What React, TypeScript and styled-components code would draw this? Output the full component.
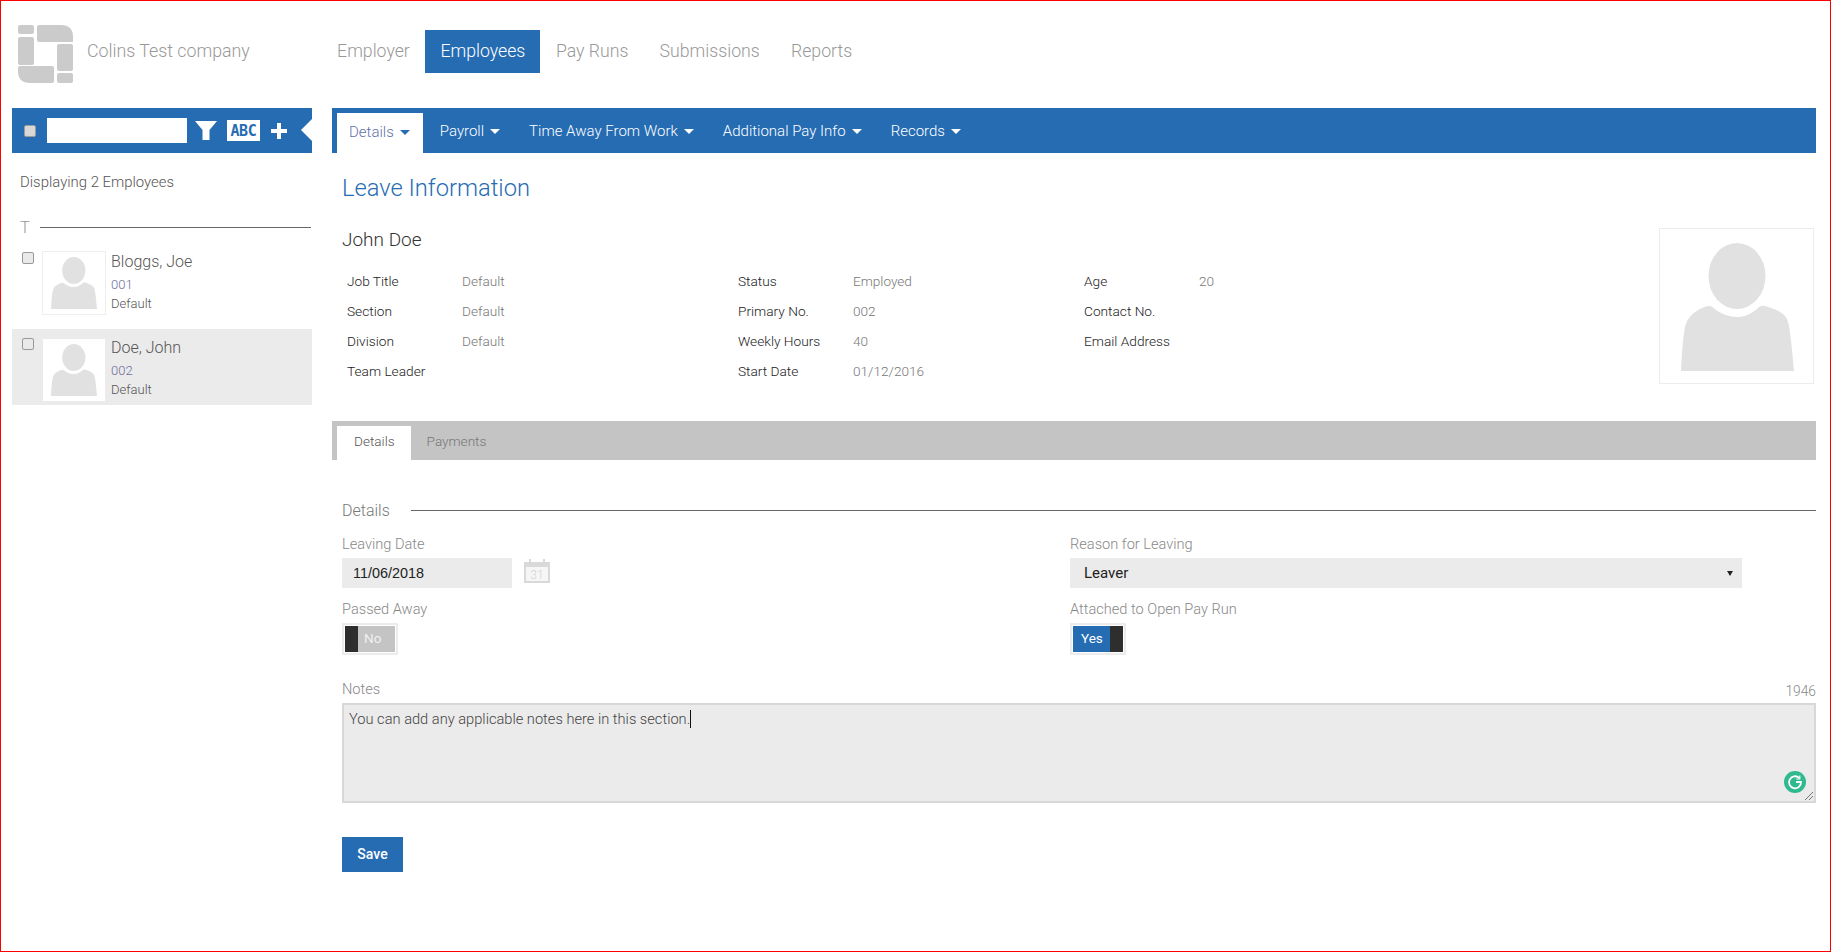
import React from "react";
import styled, { createGlobalStyle } from "styled-components";

const Global = createGlobalStyle`
  html, body { margin: 0; padding: 0; background: #fff; }
  body { font-family: Roboto, "Liberation Sans", sans-serif; font-weight: 300; color: #444; }
  * { box-sizing: border-box; }
`;

const BLUE = "#256cb3";

const Frame = styled.div`
  width: 1831px; height: 952px; border: 1px solid #f00; overflow: hidden;
  display: flex; flex-direction: column;
`;
const Header = styled.header`
  height: 107px; display: flex; align-items: flex-start; flex-shrink: 0;
`;
const Brand = styled.div`
  width: 331px; display: flex; align-items: center; padding: 24px 0 0 17px; gap: 13px;
`;
const Company = styled.span`
  font-size: 17.8px; color: #999; margin-top: -8px;
`;
const TopNav = styled.nav`
  display: flex; margin-top: 29px; margin-left: -10.5px;
`;
const TopLink = styled.a<{ $active?: boolean }>`
  height: 43px; padding: 0 ${p => (p.$active ? 15 : 15.6)}px 1px; display: flex; align-items: center; font-size: 17.7px;
  color: ${p => (p.$active ? "#fff" : "#999")};
  background: ${p => (p.$active ? BLUE : "transparent")};
`;
const Body = styled.div`
  display: flex; flex: 1; padding-left: 11px; padding-right: 14px; gap: 20px;
`;
const Sidebar = styled.aside`
  width: 300px; flex-shrink: 0; display: flex; flex-direction: column;
`;
const SideBar = styled.div`
  position: relative; height: 45px; background: ${BLUE}; display: flex; align-items: center;
  padding-left: 12px;
`;
const SideNotch = styled.div`
  position: absolute; right: 0; top: 11px; width: 0; height: 0;
  border-top: 11.5px solid transparent; border-bottom: 11.5px solid transparent;
  border-right: 11px solid #fff;
`;
const SideCheck = styled.span`
  width: 12px; height: 12px; border-radius: 2px; background: #d8d8d8; border: 1px solid #9c9c9c;
`;
const SearchBox = styled.div`
  width: 140px; height: 25px; background: #fff; margin-left: 11px;
`;
const FilterIcon = styled.svg`
  margin-left: 8px; flex-shrink: 0;
`;
const AbcBadge = styled.span`
  width: 33px; height: 21px; margin-left: 10px; background: #fff; color: ${BLUE};
  font: 700 15px/22px "DejaVu Sans Mono", monospace; text-align: center; letter-spacing: -0.3px;
`;
const PlusIcon = styled.svg`
  margin-left: 11px;
`;
const Displaying = styled.div`
  font-size: 14.9px; color: #555; padding: 21px 0 0 8px; line-height: 17px;
`;
const LetterRow = styled.div`
  display: flex; align-items: center; margin-top: 26px; padding-left: 8px; gap: 10px; height: 20px;
`;
const Letter = styled.span`
  font-size: 16.5px; color: #999;
`;
const Rule = styled.div`
  flex: 1; height: 1px; background: #666; margin-right: 1px;
`;
const PersonList = styled.div`
  display: flex; flex-direction: column; gap: 11px; margin-top: 5px;
`;
const Person = styled.div<{ $selected?: boolean }>`
  display: flex; height: 76px; padding: 9px 0 0 10px;
  background: ${p => (p.$selected ? "#ebebeb" : "transparent")};
`;
const PersonCheck = styled.span<{ $selected?: boolean }>`
  width: 12px; height: 12px; border-radius: 2px; background: #e9e9e9; border: 1px solid #999;
  flex-shrink: 0; margin-top: ${p => (p.$selected ? 0 : 1)}px;
`;
const Thumb = styled.div<{ $selected?: boolean }>`
  width: 64px; height: 64px; margin-left: 8px; background: #fff; flex-shrink: 0;
  border: 1px solid ${p => (p.$selected ? "#ebebeb" : "#eeeeee")};
  display: flex; align-items: flex-end; justify-content: center; padding-bottom: 5px;
`;
const PersonText = styled.div`
  margin-left: 5px; display: flex; flex-direction: column;
`;
const PersonName = styled.div<{ $selected?: boolean }>`
  font-size: 16px; color: #555; line-height: 20px; margin-top: ${p => (p.$selected ? 0 : 1)}px;
`;
const PersonNo = styled.div`
  font-size: 13px; color: #6e6e9a; line-height: 19px; margin-top: 3px;
`;
const PersonDept = styled.div`
  font-size: 13px; color: #555; line-height: 19px;
`;
const Main = styled.main`
  flex: 1; display: flex; flex-direction: column; min-width: 0;
`;
const SubNav = styled.div`
  height: 45px; background: ${BLUE}; display: flex; align-items: flex-end; padding-left: 5px; flex-shrink: 0;
`;
const SubItem = styled.div<{ $active?: boolean }>`
  height: 40px; display: flex; align-items: center; font-size: 15px; gap: 6px;
  padding: 0 ${p => (p.$active ? 13 : 12)}px ${p => (p.$active ? 2 : 4)}px ${p => (p.$active ? 12 : 0)}px;
  margin-right: 17px;
  color: ${p => (p.$active ? "#5f6fa8" : "#fff")};
  background: ${p => (p.$active ? "#fff" : "transparent")};
  font-weight: 300;
`;
const Caret = styled.span<{ $dark?: boolean }>`
  width: 0; height: 0; border-left: 5px solid transparent; border-right: 5px solid transparent;
  border-top: 5px solid ${p => (p.$dark ? BLUE : "#fff")};
`;
const Title = styled.h1`
  margin: 20px 0 0 10px; font-size: 23.7px; font-weight: 300; color: ${BLUE}; line-height: 30px;
`;
const InfoArea = styled.div`
  display: flex; height: 211px;
`;
const InfoLeft = styled.div`
  flex: 1; padding-left: 10px;
`;
const EmpName = styled.h2`
  margin: 25px 0 0; font-size: 19px; font-weight: 300; color: #333; line-height: 24px;
`;
const InfoGrid = styled.div`
  display: grid; grid-template-columns: 391px 346px 300px; margin-top: 14px; padding-left: 5px;
`;
const InfoCol = styled.div`
  display: flex; flex-direction: column;
`;
const InfoRow = styled.div`
  height: 30px; display: flex; align-items: center; font-size: 13.7px;
`;
const InfoKey = styled.span`
  width: 115px; color: #222; font-weight: 300;
`;
const InfoVal = styled.span`
  color: #777; font-size: 13.6px;
`;
const Photo = styled.div`
  width: 155px; height: 156px; border: 1px solid #ececec; margin-top: 25px; margin-right: 2px;
  display: flex; align-items: flex-end; justify-content: center; padding: 0 0 12px 2px;
`;
const GreyTabs = styled.div`
  height: 39px; background: #c4c4c4; display: flex; align-items: flex-end; padding-left: 5px; flex-shrink: 0;
  margin-top: 7px;
`;
const GreyTab = styled.div<{ $active?: boolean }>`
  height: 34px; font-size: 13.6px; display: flex; align-items: center;
  padding: 0 ${p => (p.$active ? 16 : 15)}px 4px ${p => (p.$active ? 17 : 16)}px;
  background: ${p => (p.$active ? "#fff" : "transparent")};
  color: ${p => (p.$active ? "#555" : "#777")};
`;
const SectionHead = styled.div`
  display: flex; align-items: center; gap: 21px; padding-left: 10px; margin-top: 40px; height: 20px;
`;
const SectionName = styled.span`
  font-size: 16px; color: #777;
`;
const SectionRule = styled.div`
  flex: 1; height: 1px; background: #666;
`;
const FormGrid = styled.div`
  display: grid; grid-template-columns: 728px 672px; padding-left: 10px; margin-top: 15px;
`;
const Field = styled.div`
  display: flex; flex-direction: column;
`;
const FieldLabel = styled.label`
  font-size: 14.6px; color: #888; line-height: 18px; height: 21px;
`;
const DateRow = styled.div`
  display: flex; align-items: flex-start; gap: 12px; height: 30px; margin-top: 2px; margin-bottom: 12px;
`;
const DateInput = styled.div`
  width: 170px; height: 30px; background: #ebebeb; font: 400 14.4px/30px "Liberation Sans", Arial, sans-serif;
  color: #222; padding-left: 11px;
`;
const CalendarIcon = styled.svg`
  margin-top: 1px;
`;
const SelectBox = styled.div`
  position: relative; height: 30px; background: #ebebeb; margin-top: 2px; margin-bottom: 12px;
  font: 400 15px/30px Roboto, sans-serif; color: #222; padding-left: 14px;
`;
const SelectArrow = styled.span`
  position: absolute; right: 9px; top: 13px; width: 0; height: 0;
  border-left: 3px solid transparent; border-right: 3px solid transparent; border-top: 5px solid #222;
`;
const ToggleFrame = styled.div`
  width: 56px; height: 32px; border: 2px solid #ececec; background: #fff; padding: 1px; display: flex;
  margin-top: 2px;
`;
const ToggleKnob = styled.span`
  width: 13px; background: #2e2e2e;
`;
const ToggleLabel = styled.span<{ $on?: boolean }>`
  width: 37px; font-size: 13.5px; font-weight: 400;
  background: ${p => (p.$on ? BLUE : "#c4c4c4")}; color: ${p => (p.$on ? "#fff" : "#f0f0f0")};
  display: flex; align-items: center; padding: 0 0 2px ${p => (p.$on ? 8 : 6)}px;
`;
const NotesHead = styled.div`
  display: flex; justify-content: space-between; align-items: flex-end; padding-left: 10px; margin-top: 24px; height: 20px;
`;
const NotesLabel = styled.span`
  font-size: 14.6px; color: #888; line-height: 20px;
`;
const Counter = styled.span`
  font-size: 13.8px; color: #888; line-height: 15px;
`;
const NotesBox = styled.div`
  position: relative; margin-left: 10px; margin-top: 4px; height: 100px; background: #ebebeb;
  border: 2px solid #d8d8d8; padding: 4px 5px; font-size: 14.65px; color: #444; line-height: 21px;
  font-weight: 300;
`;
const TextCaret = styled.span`
  display: inline-block; width: 1px; height: 18px; background: #111; vertical-align: -4px;
`;
const Grammarly = styled.svg`
  position: absolute; right: 8px; bottom: 8px;
`;
const ResizeGrip = styled.svg`
  position: absolute; right: 0; bottom: 0;
`;
const SaveButton = styled.button`
  display: block; margin: 34px 0 0 10px; width: 61px; height: 35px; background: ${BLUE}; color: #fff;
  border: 0; padding: 0 0 1px; font: 500 14px Roboto, sans-serif;
`;

const Silhouette = ({ w }: { w: number }) => (
  <svg width={w} height={(w * 128) / 113} viewBox="0 0 113 128" aria-hidden="true">
    <ellipse cx="56" cy="33" rx="28.5" ry="33" fill="#e1e1e1" />
    <path
      d="M0 128 C1 108 2 95 4 84 C6 76 10 72 14 69 C19 66 24 63 28 63 C31 63 32 65 35 67 C41 71 48 74 57 74 C65 74 71 70 76 66 C78 64 80 62 84 63 C90 65 97 67 102 71 C107 75 108 82 109 90 C111 105 112 117 113 128 Z"
      fill="#e1e1e1"
    />
  </svg>
);

const Logo = () => (
  <svg width="56" height="58" viewBox="0 0 56 58" aria-hidden="true">
    <rect x="0" y="0" width="16" height="9" rx="2" fill="#cbcbcb" />
    <path d="M21 0 H43 Q55 0 55 12 V17 H21 Q19 17 19 15 V2 Q19 0 21 0 Z" fill="#cbcbcb" />
    <rect x="0" y="12" width="16" height="28" rx="2" fill="#cbcbcb" />
    <rect x="39" y="19" width="16" height="27" rx="2" fill="#cbcbcb" />
    <path d="M2 41 H34 Q36 41 36 43 V56 Q36 58 34 58 H12 Q0 58 0 46 V43 Q0 41 2 41 Z" fill="#cbcbcb" />
    <rect x="39" y="48" width="16" height="10" rx="2" fill="#cbcbcb" />
  </svg>
);

const Row = ({ k, v }: { k: string; v?: string }) => (
  <InfoRow>
    <InfoKey>{k}</InfoKey>
    {v && <InfoVal>{v}</InfoVal>}
  </InfoRow>
);

export default function App() {
  return (
    <Frame>
      <Global />
      <Header>
        <Brand>
          <Logo />
          <Company>Colins Test company</Company>
        </Brand>
        <TopNav>
          <TopLink>Employer</TopLink>
          <TopLink $active>Employees</TopLink>
          <TopLink>Pay Runs</TopLink>
          <TopLink>Submissions</TopLink>
          <TopLink>Reports</TopLink>
        </TopNav>
      </Header>
      <Body>
        <Sidebar>
          <SideBar>
            <SideCheck />
            <SearchBox />
            <FilterIcon width="22" height="19" viewBox="0 0 22 19">
              <path d="M0 0 H22 L14.5 9 V19 H7.5 V9 Z" fill="#fff" />
            </FilterIcon>
            <AbcBadge>ABC</AbcBadge>
            <PlusIcon width="16" height="16" viewBox="0 0 16 16">
              <path d="M6 0 H10 V6 H16 V10 H10 V16 H6 V10 H0 V6 H6 Z" fill="#fff" />
            </PlusIcon>
            <SideNotch />
          </SideBar>
          <Displaying>Displaying 2 Employees</Displaying>
          <LetterRow>
            <Letter>T</Letter>
            <Rule />
          </LetterRow>
          <PersonList>
            <Person>
              <PersonCheck />
              <Thumb><Silhouette w={46} /></Thumb>
              <PersonText>
                <PersonName>Bloggs, Joe</PersonName>
                <PersonNo>001</PersonNo>
                <PersonDept>Default</PersonDept>
              </PersonText>
            </Person>
            <Person $selected>
              <PersonCheck $selected />
              <Thumb $selected><Silhouette w={46} /></Thumb>
              <PersonText>
                <PersonName $selected>Doe, John</PersonName>
                <PersonNo>002</PersonNo>
                <PersonDept>Default</PersonDept>
              </PersonText>
            </Person>
          </PersonList>
        </Sidebar>
        <Main>
          <SubNav>
            <SubItem $active>Details <Caret $dark /></SubItem>
            <SubItem>Payroll <Caret /></SubItem>
            <SubItem>Time Away From Work <Caret /></SubItem>
            <SubItem>Additional Pay Info <Caret /></SubItem>
            <SubItem>Records <Caret /></SubItem>
          </SubNav>
          <Title>Leave Information</Title>
          <InfoArea>
            <InfoLeft>
              <EmpName>John Doe</EmpName>
              <InfoGrid>
                <InfoCol>
                  <Row k="Job Title" v="Default" />
                  <Row k="Section" v="Default" />
                  <Row k="Division" v="Default" />
                  <Row k="Team Leader" />
                </InfoCol>
                <InfoCol>
                  <Row k="Status" v="Employed" />
                  <Row k="Primary No." v="002" />
                  <Row k="Weekly Hours" v="40" />
                  <Row k="Start Date" v="01/12/2016" />
                </InfoCol>
                <InfoCol>
                  <Row k="Age" v="20" />
                  <Row k="Contact No." />
                  <Row k="Email Address" />
                </InfoCol>
              </InfoGrid>
            </InfoLeft>
            <Photo><Silhouette w={113} /></Photo>
          </InfoArea>
          <GreyTabs>
            <GreyTab $active>Details</GreyTab>
            <GreyTab>Payments</GreyTab>
          </GreyTabs>
          <SectionHead>
            <SectionName>Details</SectionName>
            <SectionRule />
          </SectionHead>
          <FormGrid>
            <Field>
              <FieldLabel>Leaving Date</FieldLabel>
              <DateRow>
                <DateInput>11/06/2018</DateInput>
                <CalendarIcon width="26" height="24" viewBox="0 0 26 24">
                  <path d="M0 3 H5 V0 H7 V3 H19 V0 H21 V3 H26 V24 H0 Z" fill="#d9d9d9" />
                  <rect x="2" y="8" width="22" height="14" fill="#f6f6f6" />
                  <text x="13" y="20" fontSize="12" fontFamily="Roboto" fill="#d4d4d4" textAnchor="middle">31</text>
                </CalendarIcon>
              </DateRow>
              <FieldLabel>Passed Away</FieldLabel>
              <ToggleFrame>
                <ToggleKnob />
                <ToggleLabel>No</ToggleLabel>
              </ToggleFrame>
            </Field>
            <Field>
              <FieldLabel>Reason for Leaving</FieldLabel>
              <SelectBox>Leaver<SelectArrow /></SelectBox>
              <FieldLabel>Attached to Open Pay Run</FieldLabel>
              <ToggleFrame>
                <ToggleLabel $on>Yes</ToggleLabel>
                <ToggleKnob />
              </ToggleFrame>
            </Field>
          </FormGrid>
          <NotesHead>
            <NotesLabel>Notes</NotesLabel>
            <Counter>1946</Counter>
          </NotesHead>
          <NotesBox>
            You can add any applicable notes here in this section.<TextCaret />
            <Grammarly width="22" height="22" viewBox="0 0 22 22">
              <circle cx="11" cy="11" r="11" fill="#2fb98f" />
              <path d="M15 6.8 A6 6 0 1 0 17 11 H12" fill="none" stroke="#fff" strokeWidth="1.8" />
              <path d="M15.8 4.5 V8 H12.3" fill="none" stroke="#fff" strokeWidth="1.2" />
            </Grammarly>
            <ResizeGrip width="10" height="10" viewBox="0 0 10 10">
              <path d="M1 9 L9 1 M5 9 L9 5" stroke="#555" strokeWidth="0.8" />
            </ResizeGrip>
          </NotesBox>
          <SaveButton>Save</SaveButton>
        </Main>
      </Body>
    </Frame>
  );
}
